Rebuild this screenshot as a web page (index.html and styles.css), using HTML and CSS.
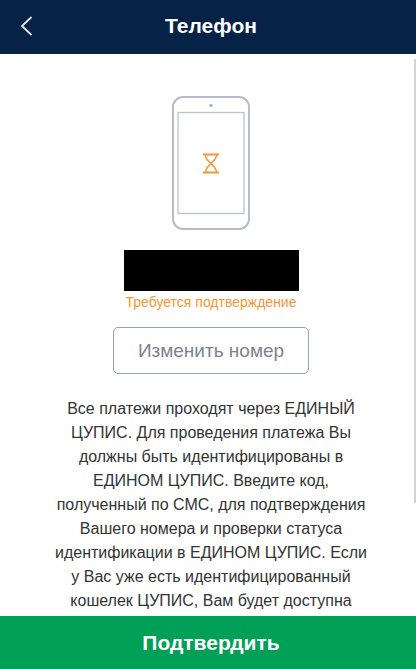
FILE: index.html
```html
<!DOCTYPE html>
<html lang="ru">
<head>
    <meta charset="UTF-8">
    <meta name="viewport" content="width=device-width, initial-scale=1.0">
    <title>Телефон</title>
    <link rel="stylesheet" href="styles.css">
</head>
<body>
    <header class="header">
        <button type="button" class="back-button" aria-label="Назад">
            <svg width="14" height="22" viewBox="0 0 14 22" fill="none" stroke="#e4e9f0" stroke-width="1.8">
                <path d="M12.500 2L3 11l9.500 9"/>
            </svg>
        </button>
        <h1 class="title">Телефон</h1>
    </header>

    <main class="content">
        <div class="scroll-area">
            <svg class="phone-icon" width="78" height="134" viewBox="0 0 78 134" fill="none">
                <rect x="1" y="1" width="76" height="132" rx="10" stroke="#b5bdc9" stroke-width="2"/>
                <rect x="6" y="16.5" width="66" height="101" stroke="#bcc3cd" stroke-width="1.3"/>
                <circle cx="39" cy="9.5" r="1.8" fill="#b0b8c4"/>
                <g stroke="#fb9433">
                    <path d="M31 58.500h16M31 76.500h16" stroke-width="2.2"/>
                    <path d="M33.500 59c0 4 2.500 5.500 5.500 8.500s5.500 5 5.500 9M44.500 59c0 4-2.500 5.500-5.500 8.500s-5.500 5-5.500 9" stroke-width="1.5"/>
                </g>
            </svg>
            <div class="phone-number"></div>
            <p class="status">Требуется подтверждение</p>
            <button type="button" class="change-button">Изменить номер</button>
            <p class="info">Все платежи проходят через ЕДИНЫЙ ЦУПИС. Для проведения платежа Вы должны быть идентифицированы в ЕДИНОМ ЦУПИС. Введите код, полученный по СМС, для подтверждения Вашего номера и проверки статуса идентификации в ЕДИНОМ ЦУПИС. Если у Вас уже есть идентифицированный кошелек ЦУПИС, Вам будет доступна</p>
        </div>
        <div class="scroll-thumb"></div>
    </main>

    <button type="submit" class="confirm-button">Подтвердить</button>
</body>
</html>
```

FILE: styles.css
```css
* {
    box-sizing: border-box;
}
body {
    display: flex;
    flex-direction: column;
    height: 100vh;
    margin: 0;
    background-color: #fff;
    color: #333;
    font-family: "Liberation Sans", Arial, sans-serif;
}
button {
    font-family: inherit;
    cursor: pointer;
}
.header {
    display: grid;
    grid-template-columns: 40px 1fr 40px;
    align-items: center;
    flex: none;
    height: 54px;
    padding: 0 0 2px 6px;
    background-color: #062246;
}
.back-button {
    display: flex;
    justify-content: center;
    align-items: center;
    height: 44px;
    padding: 0;
    border: none;
    background: none;
}
.title {
    margin: 0;
    color: #fff;
    font-size: 21px;
    line-height: 28px;
    text-align: center;
}
.content {
    position: relative;
    flex: 1;
    min-height: 0;
}
.scroll-area {
    display: flex;
    flex-direction: column;
    align-items: center;
    height: 100%;
    padding: 42px 45px 0 51px;
    overflow: hidden;
}
.phone-icon {
    flex: none;
    margin-bottom: 20px;
}
.phone-number {
    flex: none;
    width: 175px;
    height: 41px;
    background-color: #000;
}
.status {
    margin: 2px 0 16px;
    color: #fb9433;
    font-size: 14px;
    line-height: 18px;
}
.change-button {
    flex: none;
    height: 47px;
    padding: 0 24px;
    border: 1px solid #98a1ad;
    border-radius: 5px;
    background-color: #fff;
    color: #7c838e;
    font-size: 19px;
}
.info {
    max-width: 400px;
    margin: 23px 0 0;
    font-size: 16px;
    line-height: 24px;
    text-align: center;
}
.scroll-thumb {
    position: absolute;
    top: 5px;
    right: 0;
    width: 2px;
    height: 79%;
    background-color: #d3d3d3;
}
.confirm-button {
    flex: none;
    height: 53px;
    padding: 0 0 0 6px;
    border: none;
    background-color: #00a156;
    color: #fff;
    font-size: 21px;
    font-weight: bold;
}
```
